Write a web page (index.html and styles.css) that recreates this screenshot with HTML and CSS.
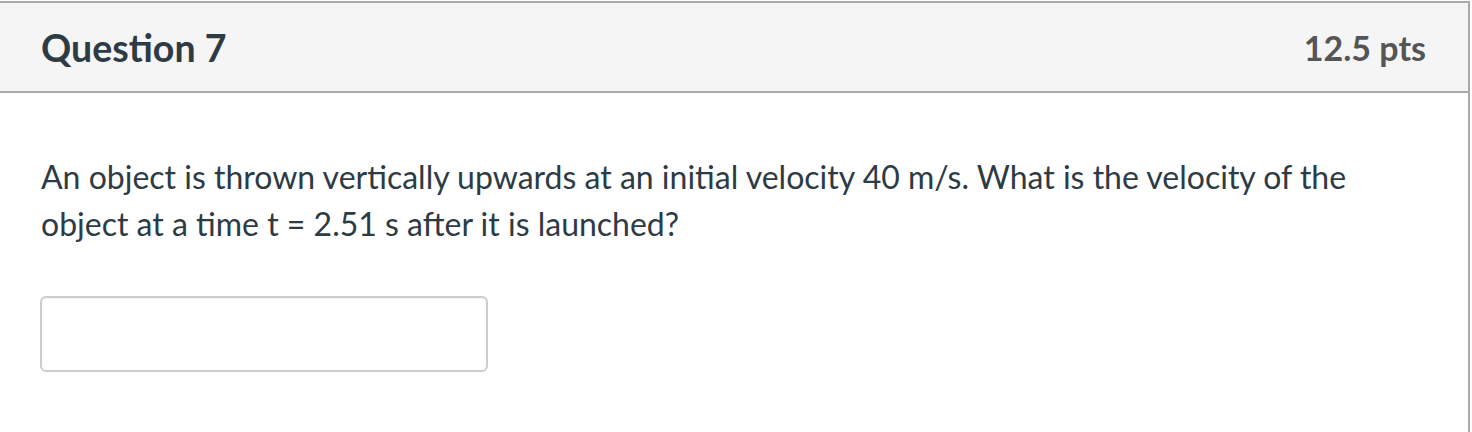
FILE: index.html
```html
<!DOCTYPE html>
<html lang="en">
<head>
<meta charset="utf-8">
<title>Question 7</title>
<link rel="stylesheet" href="styles.css">
</head>
<body>
<div class="question">
  <div class="question-header">
    <h2 class="question-title">Question 7</h2>
    <span class="question-points">12.5 pts</span>
  </div>
  <div class="question-body">
    <p class="question-text">An object is thrown vertically upwards at an initial velocity 40 m/s. What is the velocity of the object at a time t = 2.51 s after it is launched?</p>
    <input class="answer-input" type="text" aria-label="Answer">
  </div>
</div>
</body>
</html>
```
FILE: styles.css
```css
html, body {
  margin: 0;
  padding: 0;
  background: #ffffff;
}

body {
  font-family: Lato, "Open Sans", "Liberation Sans", sans-serif;
  color: #2d3b45;
}

.question {
  margin-top: 1px;
  width: 1470px;
  height: 431px;
  box-sizing: border-box;
  border-top: 2px solid #aaaaaa;
  border-right: 2px solid #aaaaaa;
  overflow: hidden;
}

.question-header {
  display: flex;
  justify-content: space-between;
  align-items: center;
  height: 88px;
  padding: 0 42px 0 41px;
  background: #f5f5f5;
  border-bottom: 2px solid #aaaaaa;
}

.question-title {
  margin: 0;
  font-size: 37.5px;
  font-weight: 700;
  color: #2d3b45;
}

.question-points {
  font-size: 34px;
  font-weight: 700;
  color: #555555;
}

.question-body {
  padding: 60px 41px 0 41px;
}

.question-text {
  margin: 0;
  font-size: 32px;
  line-height: 47px;
  max-width: 1360px;
}

.answer-input {
  display: block;
  margin: 49px 0 0 -1px;
  width: 448px;
  height: 76px;
  box-sizing: border-box;
  border: 2px solid #cccccc;
  border-radius: 6px;
  background: #ffffff;
  box-shadow: inset 0 1px 2px rgba(0, 0, 0, 0.06);
}
```
